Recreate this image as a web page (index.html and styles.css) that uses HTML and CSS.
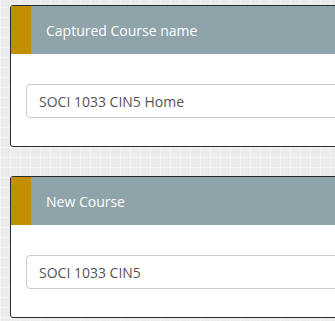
FILE: index.html
```html
<!DOCTYPE html>
<html lang="en">
<head>
    <meta charset="UTF-8">
    <title>Course</title>
    <link rel="stylesheet" href="styles.css">
</head>
<body>
    <div class="page">
        <div class="panel">
            <div class="panel-heading">
                <span class="accent"></span>
                <h3 class="panel-title">Captured Course name</h3>
            </div>
            <div class="panel-body">
                <input type="text" class="form-control" value="SOCI 1033 CIN5 Home">
            </div>
        </div>

        <div class="panel">
            <div class="panel-heading">
                <span class="accent"></span>
                <h3 class="panel-title">New Course</h3>
            </div>
            <div class="panel-body">
                <input type="text" class="form-control" value="SOCI 1033 CIN5">
            </div>
        </div>
    </div>
</body>
</html>
```

FILE: styles.css
```css
* {
    margin: 0;
    padding: 0;
    box-sizing: border-box;
}

body {
    background-color: #ebebeb;
    background-image:
        repeating-linear-gradient(0deg, #f4f4f4 0, #f4f4f4 1px, transparent 1px, transparent 10px),
        repeating-linear-gradient(90deg, #f4f4f4 0, #f4f4f4 1px, transparent 1px, transparent 10px);
    font-family: 'Open Sans', sans-serif;
    overflow: hidden;
}

.page {
    padding: 5px 0 0 10px;
    width: 380px;
    display: flex;
    flex-direction: column;
    gap: 29px;
}

.panel {
    background: #fff;
    border: 1px solid #262b30;
    border-radius: 3px 0 0 3px;
    overflow: hidden;
}

.panel-heading {
    height: 48px;
    background: #8fa3aa;
    display: flex;
    align-items: center;
}

.accent {
    width: 20px;
    height: 100%;
    background: #c18f00;
}

.panel-title {
    font-size: 14px;
    font-weight: 400;
    color: #fff;
    padding-left: 15px;
}

.panel-body {
    padding: 30px 15px 28px;
}

.form-control {
    display: block;
    width: 100%;
    height: 34px;
    padding: 6px 12px;
    border: 1px solid #cccccc;
    border-radius: 4px;
    font-family: 'Open Sans', sans-serif;
    font-size: 14px;
    color: #555;
    background: #fff;
}
```
